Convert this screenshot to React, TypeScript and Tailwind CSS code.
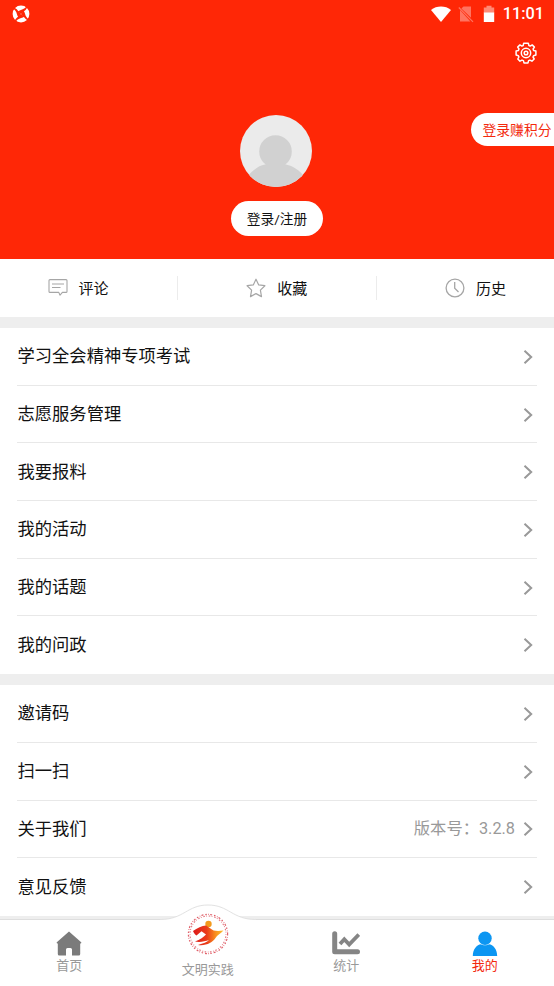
import React from 'react';

const examRows = [
    '学习全会精神专项考试',
    '志愿服务管理',
    '我要报料',
    '我的活动',
    '我的话题',
    '我的问政',
];

const otherRows = [
    { label: '邀请码' },
    { label: '扫一扫' },
    { label: '关于我们', extra: '版本号：3.2.8' },
    { label: '意见反馈' },
];

function StatusBar() {
    return (
        <div className="flex h-7 items-center justify-between pl-3 pr-[10px]">
            <svg className="h-[18px] w-[18px]" viewBox="0 0 18 18">
                <circle cx="9" cy="9" r="8.4" fill="#fff" />
                {/* pinwheel cut out of the disc */}
                {[0, 90, 180, 270].map((deg) => (
                    <path
                        key={deg}
                        d="M9 9L5.6 6.6C7.4 4.8 10.2 5.2 12.6 3.2C13.4 2.6 13.8 2 14.2 1.4L15.2 2.4C14.4 4.4 13 5.4 11.6 6.4Z"
                        fill="#ff2706"
                        transform={`rotate(${deg} 9 9)`}
                    />
                ))}
            </svg>
            <div className="flex items-center">
                <svg className="h-4 w-5" viewBox="0 0 20 16">
                    <path d="M0 4C5.5-.6 14.5-.6 20 4L10 16Z" fill="#fff" />
                </svg>
                <svg className="ml-[7px] h-[18px] w-4" viewBox="0 0 16 18">
                    <path d="M5.5 1.5H13V12.8L3.4 3.6ZM2 5L12.4 16.5H2Z" fill="#ff7460" />
                    <path d="M.8 2.5L15 16.8" stroke="#ff7460" strokeWidth="1.2" />
                </svg>
                <svg className="ml-[9px] h-[18px] w-3" viewBox="0 0 12 18">
                    <path d="M.8 2.5H3.5V.8H8.5V2.5H11.2V8H.8Z" fill="#ff8a76" />
                    <path d="M.8 7.5H11.2V17H.8Z" fill="#fff" />
                </svg>
                <span className="ml-[8px] font-[Roboto] text-[16.3px] font-medium leading-7 text-white">
                    11:01
                </span>
            </div>
        </div>
    );
}

function GearIcon() {
    return (
        <svg className="h-[22px] w-[22px]" viewBox="0 0 22 22" fill="none" stroke="#fff" strokeWidth="1.5">
            <path
                d="M8.7 1.2H13.3L13.9 3.5L15.2 4.1L17.2 2.9L19.4 5.1L18.1 7L18.6 8.4L20.9 9V13L18.6 13.7L18 15L19.2 17L16.9 19.2L14.9 18.1L13.6 18.6L13 20.9H9L8.4 18.6L7 18.1L5 19.2L2.8 17L3.9 15L3.4 13.7L1.1 13V9L3.4 8.4L4 7L2.7 5.1L4.9 2.9L6.9 4.1L8.2 3.5Z"
                strokeLinejoin="round"
            />
            <circle cx="11" cy="11" r="4.7" />
            <circle cx="11" cy="11" r="1.8" />
        </svg>
    );
}

function Avatar() {
    return (
        <svg className="mr-[2px] h-[72px] w-[72px]" viewBox="0 0 72 72">
            <defs>
                <clipPath id="avatar">
                    <circle cx="36" cy="36" r="36" />
                </clipPath>
            </defs>
            <g clipPath="url(#avatar)">
                <rect width="72" height="72" fill="#ebebeb" />
                <circle cx="35.5" cy="36.5" r="16.3" fill="#d1d1d1" />
                <path d="M5 64C12 56 18 50.5 25 49.5C27 49 27 48 26.5 46H44.5C44 48 44 49 46 49.5C53 51 59 55 65 62V72H5Z" fill="#d1d1d1" />
            </g>
        </svg>
    );
}

function CommentIcon() {
    return (
        <svg className="h-5 w-5" viewBox="0 0 20 20" fill="none" stroke="#a6a6a6" strokeWidth="1.1">
            <path d="M2 1.6H18Q19 1.6 19 2.6V13.4Q19 14.4 18 14.4H14.4L12 17.2L10.8 14.4H2Q1 14.4 1 13.4V2.6Q1 1.6 2 1.6Z" strokeLinejoin="round" />
            <path d="M4 6H16M4 9.5H12.5" />
        </svg>
    );
}

function StarIcon() {
    return (
        <svg className="h-5 w-5" viewBox="0 0 20 20" fill="none" stroke="#a6a6a6" strokeWidth="1.2">
            <path d="M10 1.2L12.7 6.9L18.9 7.7L14.4 12.1L15.5 18.6L10 15.6L4.5 18.6L5.6 12.1L1.1 7.7L7.3 6.9Z" strokeLinejoin="round" />
        </svg>
    );
}

function ClockIcon() {
    return (
        <svg className="h-5 w-5" viewBox="0 0 20 20" fill="none" stroke="#a6a6a6" strokeWidth="1.3">
            <circle cx="10" cy="10" r="8.9" />
            <path d="M9.7 4V10.2L13.5 14" />
        </svg>
    );
}

function Action({ icon, label }: { icon: React.ReactNode; label: string }) {
    return (
        <div className="flex items-center gap-[11px]">
            {icon}
            <span className="pt-[2px] text-[15px] leading-5">{label}</span>
        </div>
    );
}

function Row({ label, extra, last }: { label: string; extra?: string; last?: boolean }) {
    return (
        <div
            className={`mx-[17px] flex h-[57.7px] items-center justify-between border-b ${
                last ? 'border-transparent' : 'border-[#e8e8e8]'
            }`}
        >
            <span className="pl-[0.5px] text-[17.3px] leading-6">{label}</span>
            <div className="flex items-center gap-2">
                {extra && <span className="text-[16.3px] leading-6 text-[#999]">{extra}</span>}
                <svg className="mr-[4px] mt-px h-[14px] w-[10px]" viewBox="0 0 10 14" fill="none">
                    <path d="M1.5 .8L8.2 7L1.5 13.2" stroke="#999" strokeWidth="2" />
                </svg>
            </div>
        </div>
    );
}

function PracticeLogo() {
    return (
        <svg className="h-[42px] w-[42px]" viewBox="0 0 42 42" fill="none">
            <defs>
                <linearGradient id="flame" x1="0" x2="1">
                    <stop offset="0" stopColor="#dd1b1b" />
                    <stop offset=".45" stopColor="#ea3c1a" />
                    <stop offset=".75" stopColor="#f9921e" />
                    <stop offset="1" stopColor="#fbc02e" />
                </linearGradient>
            </defs>
            <circle cx="21" cy="21" r="19.6" stroke="#e0606a" strokeWidth="1.2" strokeDasharray="1.5 1.6 .7 1.2 2 1.9" />
            <circle cx="21" cy="21" r="18" stroke="#e57a82" strokeWidth="1.1" strokeDasharray=".8 1.7 1.6 1.4" />
            <circle cx="21.5" cy="11" r="3.2" fill="#f39a1d" />
            <path
                d="M6 18C10 15 15 12.5 19 12.5L23.5 15.5C26 18 30 18.5 36.500 17.5C34 20.5 30 22 28.5 25C25.500 29.5 19.5 33 11 32C16.5 30.500 20 29 22 27C18 28.5 12.5 29.5 8 28.5C13 26.5 17 24 19 21.5L14.5 18.2L9.5 22.500C8 21.500 7 20 6 18Z"
                fill="url(#flame)"
            />
        </svg>
    );
}

function BottomNav() {
    return (
        <nav className="relative grid h-[67px] grid-cols-4 border-t border-[#dedede] bg-white text-[13px] leading-4 text-[#999]">
            {/* raised hump behind the center logo */}
            <svg className="absolute left-[160px] top-[-16px] h-[20px] w-[96px]" viewBox="0 0 96 20">
                <path d="M0 15.5C24 15.5 27 1 48 1C69 1 72 15.5 96 15.5V20H0Z" fill="#fff" />
                <path d="M0 15.5C24 15.5 27 1 48 1C69 1 72 15.5 96 15.5" fill="none" stroke="#e2e2e2" />
            </svg>
            <div className="flex flex-col items-center pt-[11px]">
                <svg className="h-[25px] w-[26px]" viewBox="0 0 26 25">
                    <path
                        d="M13 .5L25.2 11.2Q25.8 12.2 24.7 12.5H24.2V23Q24.2 24.5 22.7 24.5H16V18.5Q16 17 14.5 17H11.5Q10 17 10 18.5V24.5H3.3Q1.8 24.5 1.8 23V12.5H1.3Q.2 12.2 .8 11.2Z"
                        fill="#7b7b7b"
                    />
                </svg>
                <span className="mt-[2px]">首页</span>
            </div>
            <div className="relative -mt-[7px] flex flex-col items-center">
                <PracticeLogo />
                <span className="mt-[7px]">文明实践</span>
            </div>
            <div className="flex flex-col items-center pt-[11px]">
                <svg className="h-[25px] w-[28px]" viewBox="0 0 28 25" fill="none">
                    <path d="M2.7 2.7V20.8H25.5" stroke="#858585" strokeWidth="5" strokeLinecap="round" strokeLinejoin="round" />
                    <path d="M8 13L12.3 8.2L17.2 13.5L26.8 3.5" stroke="#858585" strokeWidth="3.8" />
                </svg>
                <span className="mt-[2px]">统计</span>
            </div>
            <div className="flex flex-col items-center pt-[11px] text-[#f3290d]">
                <svg className="h-[25px] w-[26px]" viewBox="0 0 26 25" fill="#0c96f2">
                    <circle cx="13" cy="7.2" r="6.7" />
                    <path d="M.8 25C.8 18 5 13.5 9 13.2C11 14.5 15 14.5 17 13.2C21 13.5 25.2 18 25.2 25Z" />
                </svg>
                <span className="mt-[2px]">我的</span>
            </div>
        </nav>
    );
}

export default function App() {
    return (
        <div className="flex h-[986px] w-[554px] flex-col overflow-hidden bg-[#eee] font-[Roboto,'Noto_Sans_CJK_SC',sans-serif] text-[#111]">
            {/* Header */}
            <header className="relative h-[259px] shrink-0 bg-[#ff2706]">
                <StatusBar />
                <div className="flex justify-end pr-[17px] pt-[14px]">
                    <GearIcon />
                </div>
                <div className="mt-[51px] flex flex-col items-center">
                    <Avatar />
                    <button className="mt-[14px] h-[35px] w-[92px] rounded-full bg-white pt-px text-[13.7px]">登录/注册</button>
                </div>
                <div className="absolute right-0 top-[113px] h-[33px] w-[83px] rounded-l-full bg-white pl-[11.5px] text-[13.8px] leading-[35px] whitespace-nowrap text-[#f3290d]">
                    登录赚积分
                </div>
            </header>

            {/* Quick actions */}
            <section className="flex h-[58px] shrink-0 items-center justify-between bg-white pl-[47.5px] pr-[48px]">
                <Action icon={<CommentIcon />} label="评论" />
                <div className="h-6 w-px bg-[#ececec]" />
                <Action icon={<StarIcon />} label="收藏" />
                <div className="h-6 w-px bg-[#ececec]" />
                <Action icon={<ClockIcon />} label="历史" />
            </section>

            <section className="mt-[11px] shrink-0 bg-white">
                {examRows.map((label, i) => (
                    <Row key={label} label={label} last={i === examRows.length - 1} />
                ))}
            </section>

            <section className="mt-[11px] shrink-0 bg-white">
                {otherRows.map((row, i) => (
                    <Row key={row.label} label={row.label} extra={row.extra} last={i === otherRows.length - 1} />
                ))}
            </section>

            <div className="mt-auto">
                <BottomNav />
            </div>
        </div>
    );
}
